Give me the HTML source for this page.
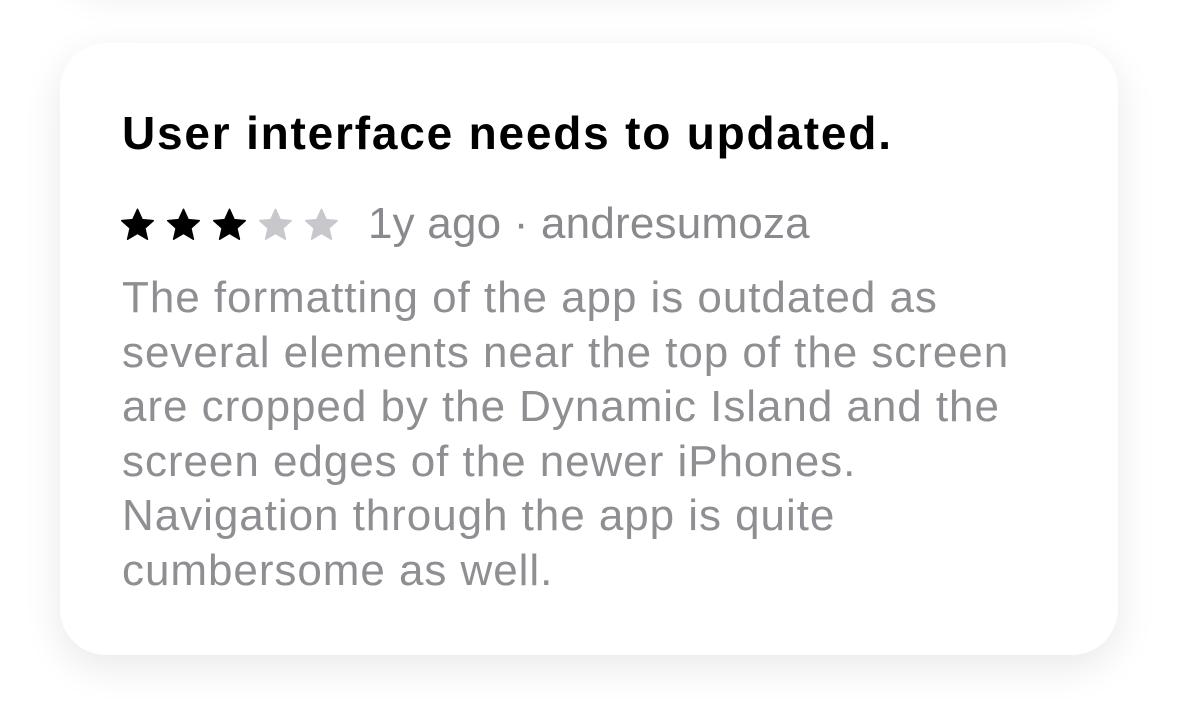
<!DOCTYPE html>
<html><head><meta charset="utf-8"><style>
html,body{margin:0;padding:0;background:#fff;width:1179px;height:717px;overflow:hidden;position:relative;font-family:"Liberation Sans",sans-serif}
.card{position:absolute;background:#fff;border-radius:46px;box-shadow:0 12px 40px rgba(0,0,0,0.09)}
.t{position:absolute;left:122px;top:106px;font-size:46px;letter-spacing:1.8px;font-weight:bold;color:#000;white-space:nowrap}
.stars{position:absolute;left:119px;top:207px;display:flex;gap:9px}
.meta{position:absolute;left:368px;top:199px;font-size:44px;letter-spacing:0.2px;color:#8a8a8e;white-space:nowrap}
.body{position:absolute;left:122px;top:271px;font-size:44px;letter-spacing:0.95px;line-height:54.5px;color:#8e8e93;white-space:nowrap}
</style></head><body>
<div class="card" style="left:60px;top:-200px;width:1058px;height:180px"></div>
<div class="card" style="left:60px;top:715px;width:1058px;height:2px;border-radius:0"></div>
<div class="card" style="left:60px;top:43px;width:1058px;height:612px"></div>
<div class="t">User interface needs to updated.</div>
<div class="stars">
<svg width="37" height="36" viewBox="0 0 24 24"><path d="M12 1.5l3.1 6.9 7.4.7-5.6 5 1.7 7.4L12 17.6l-6.6 3.9 1.7-7.4-5.6-5 7.4-.7z" fill="#000" stroke="#000" stroke-width="1" stroke-linejoin="round"/></svg>
<svg width="37" height="36" viewBox="0 0 24 24"><path d="M12 1.5l3.1 6.9 7.4.7-5.6 5 1.7 7.4L12 17.6l-6.6 3.9 1.7-7.4-5.6-5 7.4-.7z" fill="#000" stroke="#000" stroke-width="1" stroke-linejoin="round"/></svg>
<svg width="37" height="36" viewBox="0 0 24 24"><path d="M12 1.5l3.1 6.9 7.4.7-5.6 5 1.7 7.4L12 17.6l-6.6 3.9 1.7-7.4-5.6-5 7.4-.7z" fill="#000" stroke="#000" stroke-width="1" stroke-linejoin="round"/></svg>
<svg width="37" height="36" viewBox="0 0 24 24"><path d="M12 1.5l3.1 6.9 7.4.7-5.6 5 1.7 7.4L12 17.6l-6.6 3.9 1.7-7.4-5.6-5 7.4-.7z" fill="#c7c7cc" stroke="#c7c7cc" stroke-width="1" stroke-linejoin="round"/></svg>
<svg width="37" height="36" viewBox="0 0 24 24"><path d="M12 1.5l3.1 6.9 7.4.7-5.6 5 1.7 7.4L12 17.6l-6.6 3.9 1.7-7.4-5.6-5 7.4-.7z" fill="#c7c7cc" stroke="#c7c7cc" stroke-width="1" stroke-linejoin="round"/></svg>
</div>
<div class="meta">1y ago · andresumoza</div>
<div class="body">The formatting of the app is outdated as<br>several elements near the top of the screen<br>are cropped by the Dynamic Island and the<br>screen edges of the newer iPhones.<br>Navigation through the app is quite<br>cumbersome as well.</div>
</body></html>
